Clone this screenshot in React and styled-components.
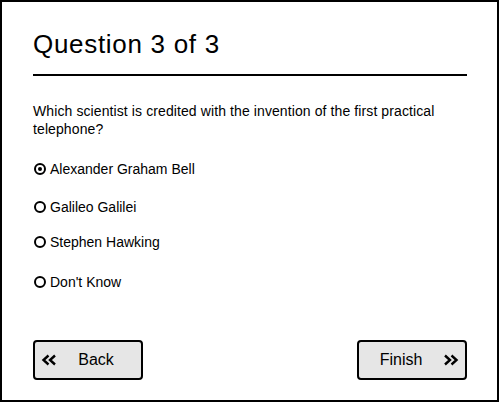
import React, { useState } from 'react'
import styled, { createGlobalStyle } from 'styled-components'

const Global = createGlobalStyle`
  html, body {
    margin: 0;
    padding: 0;
    background: #fff;
  }
  body {
    font-family: 'Liberation Sans', Arial, sans-serif;
    color: #000;
  }
`

const Frame = styled.div`
  box-sizing: border-box;
  width: 499px;
  height: 402px;
  border: 2px solid #000;
  padding: 0 30px 0 31px;
  display: flex;
  flex-direction: column;
`

const Title = styled.h1`
  margin: 0;
  padding-top: 27px;
  font-size: 26px;
  font-weight: normal;
  letter-spacing: 0.7px;
  line-height: 30px;
  padding-bottom: 15px;
  border-bottom: 2px solid #000;
`

const Prompt = styled.p`
  margin: 26px 0 0;
  font-size: 14px;
  letter-spacing: 0.1px;
  line-height: 18px;
`

const Options = styled.div`
  display: flex;
  flex-direction: column;
`

const Option = styled.label`
  display: flex;
  align-items: center;
  gap: 4px;
  margin-top: ${p => p.$gap}px;
  font-size: 14px;
  line-height: 16px;
  cursor: pointer;
`

const Radio = styled.span`
  box-sizing: border-box;
  width: 12px;
  height: 12px;
  margin-left: 1px;
  border: 2px solid #000;
  border-radius: 50%;
  display: flex;
  align-items: center;
  justify-content: center;
  &::after {
    content: '';
    width: 4px;
    height: 4px;
    border-radius: 50%;
    background: ${p => (p.$checked ? '#000' : 'transparent')};
  }
`

const Footer = styled.div`
  margin-top: auto;
  padding-bottom: 20px;
  display: flex;
  justify-content: space-between;
`

const Button = styled.button`
  box-sizing: border-box;
  width: 110px;
  height: 40px;
  border: 2px solid #000;
  border-radius: 4px;
  background: #e6e6e6;
  font-family: 'Liberation Sans', Arial, sans-serif;
  font-size: 16px;
  color: #000;
  display: flex;
  align-items: center;
  flex-direction: ${p => (p.$reverse ? 'row-reverse' : 'row')};
  padding: 0 6px;
  cursor: pointer;
`

const Label = styled.span`
  flex: 1;
  text-align: center;
  padding-right: ${p => (p.$reverse ? 6 : 0)}px;
`

const Chevrons = ({ dir }) => (
  <svg width="16" height="12" viewBox="0 0 16 12" style={{ transform: dir === 'left' ? 'scaleX(-1)' : 'none' }}>
    <path d="M2 1.5 L7 6 L2 10.5 M8.5 1.5 L13.5 6 L8.5 10.5" fill="none" stroke="#000" strokeWidth="2.4" />
  </svg>
)

const answers = [
  { text: 'Alexander Graham Bell', gap: 23 },
  { text: 'Galileo Galilei', gap: 22 },
  { text: 'Stephen Hawking', gap: 19 },
  { text: "Don't Know", gap: 24 }
]

export default function App() {
  const [picked, setPicked] = useState(0)
  return (
    <>
      <Global />
      <Frame>
        <Title>Question 3 of 3</Title>
        <Prompt>Which scientist is credited with the invention of the first practical telephone?</Prompt>
        <Options>
          {answers.map((a, i) => (
            <Option key={a.text} $gap={a.gap} onClick={() => setPicked(i)}>
              <Radio $checked={picked === i} />
              {a.text}
            </Option>
          ))}
        </Options>
        <Footer>
          <Button>
            <Chevrons dir="left" />
            <Label>Back</Label>
          </Button>
          <Button $reverse>
            <Chevrons dir="right" />
            <Label $reverse>Finish</Label>
          </Button>
        </Footer>
      </Frame>
    </>
  )
}
